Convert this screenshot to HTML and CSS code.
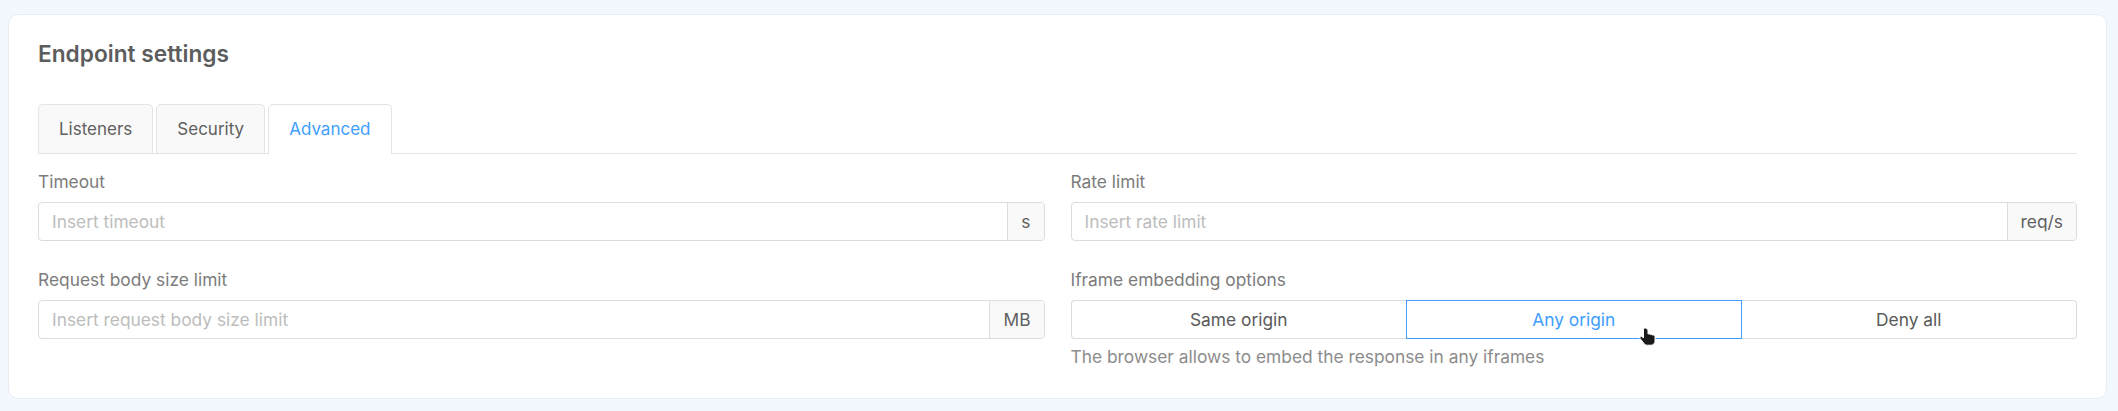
FILE: index.html
```html
<!DOCTYPE html>
<html lang="en">
<head>
<meta charset="utf-8">
<title>Endpoint settings</title>
<link rel="stylesheet" href="styles.css">
</head>
<body>
<div class="page">
  <section class="card">
    <h2 class="card-title">Endpoint settings</h2>
    <nav class="tabs">
      <div class="tab">Listeners</div>
      <div class="tab">Security</div>
      <div class="tab active">Advanced</div>
    </nav>
    <div class="form-grid">
      <div class="field">
        <label class="label">Timeout</label>
        <div class="input-group">
          <input class="input" type="text" placeholder="Insert timeout">
          <span class="addon">s</span>
        </div>
      </div>
      <div class="field">
        <label class="label">Rate limit</label>
        <div class="input-group">
          <input class="input" type="text" placeholder="Insert rate limit">
          <span class="addon">req/s</span>
        </div>
      </div>
      <div class="field">
        <label class="label">Request body size limit</label>
        <div class="input-group">
          <input class="input" type="text" placeholder="Insert request body size limit">
          <span class="addon">MB</span>
        </div>
      </div>
      <div class="field">
        <label class="label">Iframe embedding options</label>
        <div class="segmented">
          <button class="seg">Same origin</button>
          <button class="seg selected">Any origin
            <svg class="cursor" width="18" height="20" viewBox="0 0 18 20" aria-hidden="true">
              <path d="M6 1c-.8 0-1.5.7-1.5 1.5V11l-1.1-1.1c-.6-.6-1.6-.6-2.1 0-.5.5-.5 1.3 0 1.9l3.6 4.6c.9 1.1 2.2 1.8 3.6 1.8H12c2.2 0 4-1.8 4-4V9.5c0-.8-.7-1.5-1.5-1.5-.3 0-.6.1-.8.3-.2-.6-.8-1-1.4-1-.4 0-.7.1-1 .4-.2-.6-.8-1-1.4-1-.3 0-.6.1-.9.3V2.5C7.5 1.7 6.8 1 6 1z" fill="#1a1a1a" stroke="#fff" stroke-width="1"/>
            </svg>
          </button>
          <button class="seg">Deny all</button>
        </div>
        <p class="help">The browser allows to embed the response in any iframes</p>
      </div>
    </div>
  </section>
</div>
</body>
</html>
```

FILE: styles.css
```css
* { box-sizing: border-box; }

html, body {
  margin: 0;
  padding: 0;
  background: #f3f8fe;
  font-family: Inter, "Noto Sans", "Liberation Sans", sans-serif;
}

.page {
  padding: 14px 11px 13px 8px;
}

.card {
  background: #ffffff;
  border: 1px solid #e8edf3;
  border-radius: 10px;
  padding: 25px 29px 29px 29px;
}

.card-title {
  margin: 0;
  font-size: 22.7px;
  line-height: 28px;
  font-weight: 600;
  color: #5d5d5d;
}

.tabs {
  display: flex;
  gap: 3px;
  margin-top: 36px;
  border-bottom: 1px solid #e4e4e4;
}

.tab {
  font-size: 17px;
  line-height: 24px;
  padding: 12px 20px;
  color: #5f5f5f;
  background: #f9f9f9;
  border: 1px solid #e4e4e4;
  border-bottom: none;
  border-radius: 5px 5px 0 0;
}

.tab.active {
  background: #ffffff;
  color: #409eff;
  margin-bottom: -1px;
  padding-bottom: 13px;
}

.form-grid {
  display: grid;
  grid-template-columns: 1fr 1fr;
  column-gap: 26px;
  row-gap: 27px;
  margin-top: 16px;
}

.field {
  display: flex;
  flex-direction: column;
}

.label {
  font-size: 17.35px;
  line-height: 24px;
  color: #7c7c7c;
  margin-bottom: 8px;
}

.input-group {
  display: flex;
  height: 39px;
  border: 1px solid #dcdcdc;
  border-radius: 4px;
  overflow: hidden;
}

.input {
  flex: 1;
  min-width: 0;
  border: none;
  outline: none;
  padding: 0 13px;
  font-family: inherit;
  font-size: 17.35px;
  color: #555;
  background: transparent;
}

.input::placeholder {
  color: #bdbdbd;
}

.addon {
  display: flex;
  align-items: center;
  padding: 0 13px;
  background: #f9f9f9;
  border-left: 1px solid #dcdcdc;
  font-size: 17.35px;
  color: #5f5f5f;
}

.segmented {
  display: grid;
  grid-template-columns: 1fr 1fr 1fr;
  height: 39px;
}

.seg {
  position: relative;
  font-family: inherit;
  font-size: 17.35px;
  color: #5a5a5a;
  background: #ffffff;
  border: 1px solid #dcdcdc;
  margin: 0;
  padding: 0;
  cursor: pointer;
}

.seg:first-child {
  border-radius: 4px 0 0 4px;
  border-right: none;
}

.seg:last-child {
  border-radius: 0 4px 4px 0;
  border-left: none;
}

.seg.selected {
  border-color: #409eff;
  color: #409eff;
}

.cursor {
  position: absolute;
  left: 232px;
  top: 26px;
}

.help {
  margin: 6px 0 0;
  font-size: 17.35px;
  line-height: 24px;
  color: #8c8c8c;
}
```
